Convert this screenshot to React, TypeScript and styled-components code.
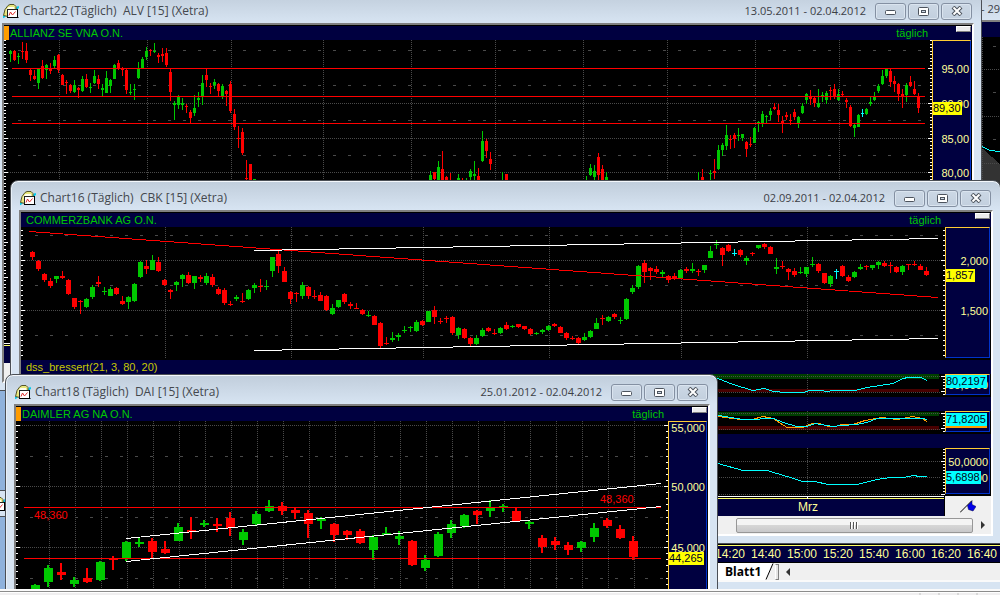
import React from "react";
import styled, { createGlobalStyle } from "styled-components";

/* ---------- theme values ---------- */

const NAVY = "#000040";
const GRID = "#4a4a4a";
const UP = "#00c800";
const DOWN = "#ff0000";
const CYAN = "#00ffff";
const ORANGE = "#ff9c00";
const TAG_YELLOW = "#ffff00";
const AXIS_TEXT = "#ffff99";
const CHART_FONT = '"Liberation Sans", Arial, sans-serif';
const TITLE_FONT = '"Open Sans", "Noto Sans", sans-serif';

const GlobalStyle = createGlobalStyle`
  * { box-sizing: border-box; }
  body { margin: 0; background: #f0f0f0; font-family: ${TITLE_FONT}; }
  button { font: inherit; padding: 0; }
`;

/* ---------- layout ---------- */

const Page = styled.div`
  display: flex;
  flex-direction: column;
  height: 100vh;
  overflow: hidden;
`;

const Desktop = styled.main`
  position: relative;
  flex: 1;
  overflow: hidden;
  background: #8fb2dc;
`;

const StatusBar = styled.footer`
  display: flex;
  justify-content: flex-end;
  gap: 17px;
  height: 6px;
  padding-right: 22px;
  border-top: 2px solid #fafafa;
  background: linear-gradient(#8c8c8c 1px, #ffffff 1px, #ffffff 2px, #f0eff0 2px);
`;

const StatusMark = styled.span`
  width: 2px;
  margin-top: 2px;
  background: #d8d8d8;
`;

const WindowFrame = styled.section<{ $top: number; $left: number; $right: number }>`
  position: absolute;
  top: ${(p) => p.$top}px;
  left: ${(p) => p.$left}px;
  right: ${(p) => p.$right}px;
  display: flex;
  flex-direction: column;
  padding: 0 7px 7px 8px;
  border: 1px solid #4b4f55;
  border-radius: 8px 8px 0 0;
  background: linear-gradient(#c0cddb, #d7e4f2 29px, #d7e4f2);
  box-shadow: inset 0 1px 0 #f4f8fc, inset 1px 0 0 #e8f0f8;
`;

const TitleBar = styled.header`
  display: flex;
  align-items: center;
  height: 29px;
  padding: 5px 2px 0 1px;
`;

const TitleText = styled.h2`
  flex: 1;
  margin: 0 0 0 4px;
  font: 400 12px/16px ${TITLE_FONT};
  color: #44484e;
  white-space: pre;
`;

const DateRange = styled.span`
  margin-right: 9px;
  font: 400 11px/16px ${TITLE_FONT};
  color: #3c4046;
  white-space: nowrap;
`;

const Controls = styled.div`
  display: flex;
  gap: 2px;
`;

const ControlButton = styled.button`
  display: flex;
  align-items: center;
  justify-content: center;
  width: 31px;
  height: 17px;
  border: 1px solid #8490a2;
  border-radius: 3px;
  background: linear-gradient(#ccd8e5, #c2cfde);
  box-shadow: inset 0 0 0 1px #dae4ef;
`;

const WindowBody = styled.div`
  display: flex;
  flex-direction: column;
  padding-top: 1px;
  border: 2px solid;
  border-color: #808080 #ffffff #ffffff #808080;
  background: #000000;
`;

const InfoBar = styled.div`
  display: flex;
  height: 14px;
  background: ${NAVY};
  font: 400 11px/14px ${CHART_FONT};
  color: ${UP};
`;

const Marker = styled.span`
  width: 5px;
  background: ${ORANGE};
`;

const InfoName = styled.span<{ $inset: number; $color?: string }>`
  flex: 1;
  padding-left: ${(p) => p.$inset}px;
  color: ${(p) => p.$color ?? UP};
  white-space: nowrap;
`;

const Period = styled.span`
  padding-right: 4px;
`;

const NubCell = styled.span<{ $width: number }>`
  display: flex;
  justify-content: flex-end;
  width: ${(p) => p.$width}px;
  padding-right: 1px;
`;

const Nub = styled.button`
  width: 15px;
  height: 6px;
  border: 1px solid;
  border-color: #ffffff #808080 #808080 #ffffff;
  background: #ececec;
`;

const PlotRow = styled.div<{ $height: number }>`
  display: flex;
  height: ${(p) => p.$height}px;
  background: #000000;
`;

const Plot = styled.svg`
  flex: 1;
  min-width: 0;
  height: 100%;
  overflow: hidden;
`;

const RulerSvg = styled.svg`
  width: 4px;
  height: 100%;
`;

const AxisPanel = styled.div<{ $width: number; $gap: number }>`
  width: ${(p) => p.$width - 1}px;
  margin: 0 1px ${(p) => p.$gap}px 0;
  border: 1px solid;
  border-color: #ffcc33 #0033cc #0033cc #ffcc33;
  background: ${NAVY};
`;

const AxisSvg = styled.svg`
  display: block;
  width: 100%;
  height: 100%;
  overflow: visible;
  font: 400 11px ${CHART_FONT};
`;

const TimeRow = styled.div`
  display: flex;
  height: 20px;
  background: #f0f0f0;
`;

const TimeAxis = styled.div`
  flex: 1;
  min-width: 0;
  border-right: 1px solid #000000;
  background: linear-gradient(#ffffff 1px, #000000 1px, #000000 2px, #ffff66 2px, #ffff66 3px, ${NAVY} 3px);
`;

const TimeSvg = styled.svg`
  display: block;
  width: 100%;
  height: 20px;
  font: 400 12px ${CHART_FONT};
`;

const PenCell = styled.div<{ $width: number }>`
  display: flex;
  align-items: center;
  justify-content: center;
  width: ${(p) => p.$width}px;
`;

const ScrollBar = styled.div`
  display: flex;
  align-items: center;
  height: 18px;
  background: #f0f0f0;
`;

const ScrollArrow = styled.button`
  display: flex;
  align-items: center;
  justify-content: center;
  width: 18px;
  height: 18px;
  border: 0;
  background: transparent;
`;

const ScrollThumb = styled.button`
  display: flex;
  align-items: center;
  justify-content: center;
  width: 237px;
  height: 15px;
  margin-left: auto;
  border: 1px solid #979797;
  border-radius: 2px;
  background: linear-gradient(#f4f4f4 45%, #d6d6d6 50%, #c8c8ca);
`;

/* ---------- intraday window behind the others ---------- */

const BackWindow = styled.section`
  position: absolute;
  inset: 0 0 0 710px;
  display: flex;
  flex-direction: column;
  padding-bottom: 7px;
  background: #d7e4f2;
`;

const BackTitle = styled.header`
  height: 22px;
  border-bottom: 2px solid #808080;
  background: linear-gradient(#c9d5e2, #d7e4f2);
  font: 400 11px/18px ${TITLE_FONT};
  color: #3c4046;
  text-align: right;
`;

const BackInfo = styled.div`
  height: 15px;
  background: ${NAVY};
`;

const BackPlot = styled.div`
  flex: 1;
  min-height: 0;
  display: flex;
  background: #000000;
`;

const Times = styled.ol`
  display: flex;
  justify-content: flex-end;
  height: 19px;
  margin: 0;
  padding: 0;
  list-style: none;
  border-bottom: 1px solid #000000;
  background: linear-gradient(#000000 1px, #ffff66 1px, #ffff66 2px, ${NAVY} 2px);
  font: 400 12px/20px ${CHART_FONT};
  color: ${AXIS_TEXT};
`;

const TimeCell = styled.li`
  flex: 0 0 36px;
  text-align: center;
`;

const SheetTabs = styled.nav`
  display: flex;
  align-items: center;
  height: 19px;
  padding-left: 7px;
  background: #f0f0f0;
  border-bottom: 2px solid #fafafa;
`;

const SheetTab = styled.button`
  width: 46px;
  height: 17px;
  padding-left: 8px;
  border: 0;
  background: #ffffff;
  font: 700 12px/16px ${TITLE_FONT};
  color: #000000;
  text-align: left;
`;

const Splitter = styled.span`
  width: 4px;
  height: 16px;
  border: 1px solid #808080;
  border-left-color: #ffffff;
  background: #e4e4e4;
`;

const MiniWindow = styled.section`
  position: absolute;
  top: 490px;
  left: -140px;
  width: 160px;
  height: 27px;
  padding: 4px 0 0 129px;
  border: 1px solid #4b4f55;
  background: #d7e4f2;
`;

/* ---------- chart data ---------- */

type Run = [start: number, candles: string];
type Pt = [x: number, y: number];

const ALV: Run[] = [
  [0, "g50 51 54 62,r50 51 60 61,g53 56 57 64,r42 51 52 59,r43 51 60 63,r69 70 75 81,r70 76 79 80,g68 69 83 89,r60 66 78 79,g64 65 70 79,r63 69 71 74,g56 60 66 68,r54 55 70 73,r74 75 85 85,r80 82 83 94,r84 85 91 93,g80 85 92 93,r87 88 90 98,g76 79 91 92,r74 79 87 88,g83 87 88 93,g70 76 83 84,r75 79 84 89,g84 88 90 96,g71 78 93 93,g79 80 86 93,g64 65 79 79,r60 63 68 70,r67 68 70 76,r69 70 90 94,g84 92 93 95,g84 89 90 100,g62 69 78 79,g57 59 69 69,g47 51 57 60,r49 50 51 56,g43 51 52 53,r53 55 57 63,r48 54 56 62,r48 53 65 67,r69 72 92 101,g101 103 105 120,g95 97 105 109,g98 103 105 110,r104 106 107 113,r110 112 118 123,g95 108 113 116,g92 98 100 107,g75 83 96 105,r69 75 80 87,r83 86 87 94,g79 82 85 89,r83 84 91 97,g84 86 96 99,r90 91 94 106,r81 84 111 113,r109 114 127 130,r126 138 139 148,r128 132 153 155,r160 178 179 190,r164 164 200 200,g179 179 200 200"],
  [105, "g171 175 200 200,r172 172 179 190,g161 167 200 200,r151 169 200 200,r176 177 200 200,r173 198 199 200"],
  [112, "g174 178 200 200,r178 198 199 200,g178 198 199 200,g169 171 177 190,g161 174 176 190,r168 176 200 200,g131 141 161 162,r139 141 151 158,r152 159 164 170"],
  [123, "g172 198 199 200,r174 174 200 200"],
  [144, "g176 198 199 200,g164 168 175 176,g165 171 177 190,r153 157 175 190,r165 169 200 200,g172 177 200 200"],
  [172, "g172 198 199 200,r169 177 200 200"],
  [175, "g170 173 174 190,r159 171 173 179,g145 150 169 170,g143 145 150 156,g125 135 146 150,r135 139 140 149,r133 135 139 148,g128 135 136 141,g134 134 138 141,r141 142 149 157,r137 144 145 147,g127 128 143 143,g121 122 123 132,g111 114 123 127,g115 116 117 123,g108 111 115 120,r103 107 109 110,r104 110 115 122,r116 121 123 133,r112 115 117 120,r114 120 121 125,r109 112 117 120,g116 117 123 128,g103 106 113 114,g93 94 100 104,r90 97 99 105,r96 98 103 107,g89 103 107 108,g92 95 97 102,g91 93 100 104,r87 90 91 100,r84 89 97 99,g89 94 100 101,r91 94 95 97,r98 100 102 108,r105 107 126 127,g124 125 128 137,g114 115 127 127,c109 113 114 117,g108 109 114 115,g97 102 104 106,g92 96 100 101,g84 86 91 93,g70 76 84 85,g69 69 76 78,r69 71 82 87,r76 81 84 92,r83 84 94 101,r89 94 97 108,g83 85 95 102,r76 82 86 87,r81 89 94 95,r93 96 108 113"],
];

const CBK: Run[] = [
  [0, "r251 252 257 260,r260 261 269 271,r273 274 280 282,r278 281 286 288,g276 276 279 283,r271 276 278 279,r279 280 294 295,r298 298 307 309,r300 301 302 314,g298 299 307 308,g285 287 297 299,r276 282 284 287,g287 291 292 295,g287 289 296 296,r287 288 294 295,r296 301 304 305,g296 297 302 309,g283 284 301 302,g261 262 277 278,r260 266 269 274,g255 260 270 270,r257 262 271 272,r279 280 285 286,r289 290 292 299,g281 282 285 291,g274 275 279 287,r272 275 283 284,g276 276 283 289,r275 277 279 282,g273 276 283 285,r274 277 285 287,r287 289 294 295,r288 290 303 305,r301 304 305 306,g295 297 299 301,r293 301 302 303,g289 290 299 300,g283 285 288 293,r279 286 287 292,g280 286 287 290,g257 257 271 277,r251 254 266 273,r267 271 282 282,r291 292 299 304,r292 293 294 302,g282 285 296 299,r286 287 296 299,r290 296 297 299,r292 295 301 301,r295 296 310 311,g304 308 314 315,g300 300 307 308,r293 294 302 304,r302 304 306 309,r303 308 309 309,r309 310 314 315,g311 315 316 317,r315 316 325 325,r322 323 346 348,r337 343 344 345,g332 338 340 342,g333 335 337 341,g326 330 331 333,g326 327 328 332,g320 322 331 332,r320 321 325 326,g311 311 322 322,r306 310 317 324,r318 321 322 324,r316 318 319 323,r316 317 333 335,g327 328 335 339,r328 329 338 339,r337 338 344 346,g335 338 344 345,g328 330 336 337,r327 328 331 332,r329 333 334 335,g327 328 333 334,r322 325 329 330,g325 326 327 328,r324 324 327 328,r326 326 329 330,r328 329 334 335,g332 333 334 335,g329 330 332 334,g325 326 330 331,r323 324 326 327,r326 327 333 333,r332 333 338 340,r336 338 339 340,r337 338 343 344,g333 337 340 341,g330 331 337 338,g318 323 329 329,r315 318 319 325,g316 317 321 322,r313 314 317 319,g317 320 321 324,g298 299 319 320,g285 288 292 294,g265 266 287 289,r260 263 272 283,r267 268 271 280,r266 269 272 274,g270 272 274 277,r275 276 280 283,r273 276 279 280,g269 270 278 279,r267 269 271 273,g263 269 271 273,r269 271 272 276,g265 265 270 273,g246 251 258 258,g240 244 245 249,r247 248 255 266,r244 245 251 252,c249 253 254 256,r249 250 255 257,g256 258 261 265,r252 253 254 256,g245 245 248 249,r243 244 247 249,r246 247 254 254,g258 267 269 274,r261 266 267 269,r268 269 272 280,r268 271 275 277,g267 272 273 274,g267 267 274 277,g257 264 265 267,r263 264 271 273,r273 273 283 284,g275 276 284 287,c269 271 272 279,r265 266 276 277,r275 277 281 282,g271 272 277 278,g264 267 269 270,r265 266 267 270,g265 265 268 270,g261 262 265 269,r261 263 266 267,r262 265 266 273,r266 267 272 273,g265 266 272 275,r264 264 265 270,r261 264 265 266,r264 266 270 270,r267 271 275 276"],
];

const DAI: Run[] = [
  [0, "g584 585 590 590,g565 568 582 587,r563 572 575 580,g577 580 584 587,r568 578 582 583,g561 562 580 581,r556 559 560 570,g541 542 558 561,g538 542 544 547,r538 541 552 558,r541 549 553 554,g523 527 541 541,r517 530 532 539,g520 523 525 527,r518 524 526 532,r512 518 528 536,g529 532 540 545,g511 514 524 525,g500 506 511 512,r502 506 511 515,r507 510 513 519,r510 513 524 538,g517 519 521 529,r523 524 535 542,r530 531 535 540,r529 531 543 544,g535 537 550 560,g527 533 535 535,g531 536 539 545,r540 541 565 566,g555 560 568 571,g532 534 556 557,g520 524 533 538,g514 515 526 528,r510 511 515 524,g500 508 511 517,g504 506 508 512,r507 511 521 521,g520 522 524 529,r535 538 547 553,r537 541 545 550,r542 545 550 555,g541 542 548 552,g523 528 537 542,r518 520 526 528,r525 529 538 539,r536 541 557 560"],
];

const STOCH: Pt[] = [[700, 374], [718, 378], [733, 384], [753, 390], [764, 388], [774, 391], [786, 392], [803, 392], [810, 390], [820, 390], [827, 391], [834, 390], [855, 390], [867, 387], [880, 385], [893, 383], [903, 378], [908, 377], [921, 377], [927, 380]];
const FAST: Pt[] = [[700, 414], [718, 415], [725, 416], [743, 419], [753, 419], [768, 418], [774, 418], [783, 422], [797, 426], [807, 426], [815, 423], [833, 426], [842, 425], [857, 424], [867, 422], [877, 418], [923, 418], [927, 419]];
const SLOW: Pt[] = [[700, 414], [718, 416], [732, 418], [742, 419], [752, 419], [763, 416], [773, 418], [787, 427], [803, 427], [812, 423], [820, 423], [828, 426], [835, 426], [842, 424], [853, 424], [865, 420], [882, 417], [897, 419], [913, 416], [922, 418], [927, 421]];
const MOMENTUM: Pt[] = [[700, 458], [718, 463], [743, 470], [767, 470], [787, 476], [803, 481], [815, 481], [828, 484], [857, 484], [877, 479], [890, 477], [904, 477], [913, 475], [920, 476], [927, 476]];

/* ---------- chart parts ---------- */

const COLORS: Record<string, string> = { g: UP, r: DOWN, c: CYAN };

interface CandlesProps {
  runs: Run[];
  first: number;
  step: number;
  body: number;
  wick?: number;
}

function Candles({ runs, first, step, body, wick = 1 }: CandlesProps) {
  return (
    <>
      {runs.flatMap(([start, text]) =>
        text.split(",").map((item, i) => {
          const [hi, top, bottom, lo] = item.slice(1).split(" ").map(Number);
          const x = first + (start + i) * step;
          return (
            <g key={x} fill={COLORS[item[0]]}>
              <rect x={x - (wick - 1)} y={hi} width={wick} height={Math.max(lo - hi, 1)} />
              <rect x={x - (body - 1) / 2} y={top} width={body} height={Math.max(bottom - top, 1)} />
            </g>
          );
        }),
      )}
    </>
  );
}

interface GridProps {
  x0: number;
  x1: number;
  y0: number;
  y1: number;
  rows?: number[];
  halfRows?: number[];
  cols?: number[];
  phase?: number;
}

function Grid({ x0, x1, y0, y1, rows = [], halfRows = [], cols = [], phase = 0 }: GridProps) {
  const dotted = [
    ...rows.map((y) => `M${x0} ${y + 0.5}H${x1}`),
    ...cols.map((x) => `M${x + 0.5} ${y0}V${y1}`),
  ].join("");
  const dashed = halfRows.map((y) => `M${phase} ${y + 0.5}H${x1}`).join("");
  return (
    <g stroke={GRID} fill="none">
      <path d={dotted} strokeDasharray="1 1" />
      <path d={dashed} strokeDasharray="3 12" />
    </g>
  );
}

function HLine({ y, x0, x1 }: { y: number; x0: number; x1: number }) {
  return <rect x={x0} y={y} width={x1 - x0} height={1} fill={DOWN} />;
}

function Curve({ points, color }: { points: Pt[]; color: string }) {
  return (
    <polyline
      points={points.map(([x, y]) => `${x},${y + 0.5}`).join(" ")}
      fill="none"
      stroke={color}
    />
  );
}

interface Scale {
  y0: number;
  y1: number;
  major: number;
  step: number;
  every: number;
}

function Ruler({ scale, side }: { scale: Scale; side: "left" | "right" }) {
  const ticks: React.ReactElement[] = [];
  const from = Math.ceil((scale.y0 - scale.major) / scale.step);
  const to = Math.floor((scale.y1 - scale.major) / scale.step);
  for (let k = from; k <= to; k++) {
    const len = k % scale.every === 0 ? 4 : 2;
    const y = Math.round(scale.major + k * scale.step) - scale.y0;
    ticks.push(<rect key={k} x={side === "left" ? 0 : 4 - len} y={y} width={len} height={1} fill="#fff" />);
  }
  return <RulerSvg aria-hidden="true" shapeRendering="crispEdges">{ticks}</RulerSvg>;
}

interface AxisLabel {
  y: number;
  text: string;
}

interface AxisTag extends AxisLabel {
  color: string;
  width: number;
  underline?: string;
}

interface PanelProps {
  height: number;
  axisWidth: number;
  axisGap?: number;
  origin: Pt;
  scale: Scale;
  labels: AxisLabel[];
  tag: AxisTag;
  children: React.ReactNode;
}

function Panel({ height, axisWidth, axisGap = 2, origin, scale, labels, tag, children }: PanelProps) {
  const tagY = tag.y - origin[1] - 7;
  return (
    <PlotRow $height={height}>
      <Ruler scale={scale} side="left" />
      <Plot shapeRendering="crispEdges" fontFamily={CHART_FONT} fontSize={11}>
        <g transform={`translate(${-origin[0] - 4} ${-origin[1]})`}>{children}</g>
      </Plot>
      <Ruler scale={scale} side="right" />
      <AxisPanel $width={axisWidth} $gap={axisGap}>
        <AxisSvg>
          {labels.map((l) => (
            <text key={l.text} x={axisWidth - 4} y={l.y - origin[1] + 4} textAnchor="end" fill={AXIS_TEXT}>
              {l.text}
            </text>
          ))}
          <rect x={0} y={tagY} width={tag.width} height={13} fill={tag.color} />
          {tag.underline && <rect x={0} y={tagY + 13} width={tag.width} height={2} fill={tag.underline} />}
          <text x={0} y={tagY + 10} fill="#000020">
            {tag.text}
          </text>
        </AxisSvg>
      </AxisPanel>
    </PlotRow>
  );
}

/* ---------- window chrome ---------- */

function ChartIcon() {
  return (
    <svg width="16" height="15" viewBox="0 0 16 15" aria-hidden="true">
      <path d="M0 13.5 5 8.500M11 7.500 15.800 2.500" stroke="#00c8e8" strokeWidth="2" />
      <path d="M.5 11.500 2 5.500 5 1.500 7 .5H11L13 2.500V6L5 12.500Z" fill="#e9e77c" stroke="#55552a" />
      <path d="M3.500 5.500 5.500 3H11L11.500 5.500H4.500L3.500 8Z" fill="#fffff0" />
      <rect x="4.500" y="5.500" width="10" height="8" fill="#fff" stroke="#222" />
      <path d="M4 13.500H15.500M14.500 5V14" stroke="#000" />
      <path d="M6 11.500 7.500 8 9.500 11 12.500 7.500" fill="none" stroke="#e03030" />
    </svg>
  );
}

function MinimizeGlyph() {
  return (
    <svg width="12" height="9" aria-hidden="true">
      <rect x=".5" y="3.500" width="10" height="4" rx="1" fill="#fff" stroke="#4c535d" />
    </svg>
  );
}

function RestoreGlyph() {
  return (
    <svg width="11" height="9" aria-hidden="true">
      <rect x=".5" y=".5" width="10" height="8" rx="1" fill="#fff" stroke="#4c535d" />
      <rect x="3.500" y="3.500" width="4" height="2" fill="#d0dae6" stroke="#4c535d" />
    </svg>
  );
}

function CloseGlyph() {
  return (
    <svg width="12" height="10" aria-hidden="true">
      <path d="M2 1 10 9M10 1 2 9" stroke="#4c535d" strokeWidth="4" />
      <path d="M2.500 1.500 9.500 8.500M9.500 1.500 2.500 8.500" stroke="#fff" strokeWidth="2" />
    </svg>
  );
}

function PenIcon() {
  return (
    <svg width="16" height="13" viewBox="0 0 16 13" aria-hidden="true">
      <path d="M0 12.500 12 .5" stroke="#000" />
      <path d="M7.500 5.500 12 1V4.500L16 6.500 13 11 8.500 9.500Z" fill="#0000e8" stroke="#000040" strokeWidth=".5" />
    </svg>
  );
}

function Arrow({ flip }: { flip?: boolean }) {
  return (
    <svg width="5" height="8" aria-hidden="true">
      <path d={flip ? "M4 0V8L0 4Z" : "M1 0V8L5 4Z"} fill="#333" />
    </svg>
  );
}

interface ChartWindowProps {
  top: number;
  left: number;
  right: number;
  title: string;
  range: string;
  name: string;
  marker?: boolean;
  axisWidth: number;
  timeLabel?: string;
  children: React.ReactNode;
}

function ChartWindow(p: ChartWindowProps) {
  return (
    <WindowFrame $top={p.top} $left={p.left} $right={p.right} aria-label={p.title}>
      <TitleBar>
        <ChartIcon />
        <TitleText>{p.title}</TitleText>
        <DateRange>{p.range}</DateRange>
        <Controls>
          <ControlButton aria-label="Minimieren"><MinimizeGlyph /></ControlButton>
          <ControlButton aria-label="Wiederherstellen"><RestoreGlyph /></ControlButton>
          <ControlButton aria-label="Schließen"><CloseGlyph /></ControlButton>
        </Controls>
      </TitleBar>
      <WindowBody>
        <InfoBar>
          {p.marker && <Marker />}
          <InfoName $inset={p.marker ? 1 : 5}>{p.name}</InfoName>
          <Period>täglich</Period>
          <NubCell $width={p.axisWidth}>
            <Nub aria-label="Skala" />
          </NubCell>
        </InfoBar>
        {p.children}
        <TimeRow>
          <TimeAxis>
            <TimeSvg>
              {p.timeLabel && (
                <>
                  <rect x={786} y={0} width={1} height={3} fill="#fff" />
                  <text x={787} y={15} textAnchor="middle" fill={AXIS_TEXT}>{p.timeLabel}</text>
                </>
              )}
            </TimeSvg>
          </TimeAxis>
          <PenCell $width={p.axisWidth}><PenIcon /></PenCell>
        </TimeRow>
        <ScrollBar>
          <ScrollArrow aria-label="Nach links"><Arrow flip /></ScrollArrow>
          <ScrollThumb aria-label="Bildlauf">
            <svg width="9" height="7" shapeRendering="crispEdges" aria-hidden="true">
              <path d="M.5 0V7M3.500 0V7M6.500 0V7" stroke="#555" />
              <path d="M1.500 0V7M4.500 0V7M7.500 0V7" stroke="#fff" />
            </svg>
          </ScrollThumb>
          <ScrollArrow aria-label="Nach rechts"><Arrow /></ScrollArrow>
        </ScrollBar>
      </WindowBody>
    </WindowFrame>
  );
}

/* ---------- page ---------- */

const ALV_SCALE: Scale = { y0: 40, y1: 340, major: 68, step: 3.48, every: 10 };
const CBK_SCALE: Scale = { y0: 227, y1: 356, major: 260, step: 5, every: 10 };
const DAI_SCALE: Scale = { y0: 421, y1: 600, major: 425, step: 6.1, every: 10 };
const TIMES = ["14:20", "14:40", "15:00", "15:20", "15:40", "16:00", "16:20", "16:40"];

export default function App() {
  return (
    <Page>
      <GlobalStyle />
      <Desktop>
        <MiniWindow><ChartIcon /></MiniWindow>

        <BackWindow>
          <BackTitle>- 29</BackTitle>
          <BackInfo />
          <BackPlot>
            <Plot shapeRendering="crispEdges">
              <g transform="translate(-710 -37)">
                <path d="M975 142 1000 164V600H975Z" fill="#333333" />
                <Grid x0={982} x1={1000} y0={37} y1={600} rows={[69, 116, 163]} halfRows={[46, 92, 139]} cols={[982]} phase={993} />
                <Curve points={[[975, 144], [982, 146], [990, 150], [1000, 151]]} color={CYAN} />
              </g>
            </Plot>
          </BackPlot>
          <Times>
            {TIMES.map((t) => <TimeCell key={t}>{t}</TimeCell>)}
          </Times>
          <SheetTabs>
            <SheetTab>Blatt1</SheetTab>
            <svg width="12" height="17" aria-hidden="true">
              <path d="M0 0H9L3 17H0Z" fill="#fff" />
              <path d="M3 16.500 10 .5" stroke="#000" />
            </svg>
            <Splitter />
            <ScrollArrow aria-label="Blätter nach links"><Arrow flip /></ScrollArrow>
          </SheetTabs>
        </BackWindow>

        <ChartWindow top={-7} left={-7} right={18} title="Chart22 (Täglich)  ALV [15] (Xetra)" range="13.05.2011 - 02.04.2012" name="ALLIANZ SE VNA O.N." marker axisWidth={40}>
          <Panel
            height={303}
            axisWidth={40}
            origin={[4, 40]}
            scale={ALV_SCALE}
            labels={[{ y: 68, text: "95,00" }, { y: 103, text: "90,00" }, { y: 138, text: "85,00" }, { y: 172, text: "80,00" }]}
            tag={{ y: 108, text: "89,30", color: TAG_YELLOW, width: 29 }}
          >
            <Grid x0={8} x1={928} y0={40} y1={343} rows={[103, 138, 172]} halfRows={[50, 85, 120, 155]} cols={[59, 147, 231, 323, 411, 495, 583, 667, 755, 839]} phase={18} />
            <Candles runs={ALV} first={10} step={4} body={3} />
            <HLine y={68} x0={12} x1={925} />
            <HLine y={96} x0={12} x1={925} />
            <HLine y={123} x0={12} x1={925} />
          </Panel>
        </ChartWindow>

        <ChartWindow top={180} left={10} right={-1} title="Chart16 (Täglich)  CBK [15] (Xetra)" range="02.09.2011 - 02.04.2012" name="COMMERZBANK AG O.N." axisWidth={46} timeLabel="Mrz">
          <Panel
            height={133}
            axisWidth={46}
            origin={[21, 227]}
            scale={CBK_SCALE}
            labels={[{ y: 260, text: "2,000" }, { y: 310, text: "1,500" }]}
            tag={{ y: 275, text: "1,857", color: TAG_YELLOW, width: 29 }}
          >
            <Grid x0={25} x1={941} y0={227} y1={358} rows={[260, 310]} halfRows={[235, 285, 335]} cols={[165, 291, 423, 549, 681, 807]} phase={35} />
            <Candles runs={CBK} first={32} step={6} body={5} />
            <Curve points={[[29, 231], [938, 297]]} color={DOWN} />
            <Curve points={[[254, 250], [938, 238]]} color="#ffffff" />
            <Curve points={[[254, 350], [938, 338]]} color="#ffffff" />
          </Panel>
          <InfoBar><InfoName $inset={5} $color="#c8c800">dss_bressert(21, 3, 80, 20)</InfoName></InfoBar>
          <Panel
            height={23}
            axisWidth={46}
            origin={[21, 374]}
            scale={{ y0: 374, y1: 394, major: 376, step: 3, every: 5 }}
            labels={[{ y: 384, text: "50,0000" }]}
            tag={{ y: 381, text: "80,2197", color: CYAN, width: 41 }}
          >
            <rect x={21} y={374} width={918} height={5} fill="#004000" />
            <rect x={21} y={389} width={918} height={3} fill="#480000" />
            <Grid x0={25} x1={941} y0={374} y1={395} rows={[376, 392]} cols={[807]} />
            <Curve points={STOCH} color={CYAN} />
          </Panel>
          <InfoBar />
          <Panel
            height={23}
            axisWidth={46}
            origin={[21, 411]}
            scale={{ y0: 411, y1: 431, major: 413, step: 3, every: 5 }}
            labels={[]}
            tag={{ y: 419, text: "71,8205", color: CYAN, width: 41, underline: ORANGE }}
          >
            <rect x={21} y={412} width={918} height={4} fill="#004000" />
            <rect x={21} y={426} width={918} height={4} fill="#480000" />
            <Grid x0={25} x1={941} y0={411} y1={432} rows={[413, 429]} cols={[807]} />
            <Curve points={SLOW} color={ORANGE} />
            <Curve points={FAST} color={CYAN} />
          </Panel>
          <InfoBar />
          <Panel
            height={48}
            axisWidth={46}
            origin={[21, 448]}
            scale={{ y0: 448, y1: 495, major: 461, step: 3, every: 11 }}
            labels={[{ y: 461, text: "50,0000" }, { y: 477, text: "0,0000" }]}
            tag={{ y: 477, text: "5,6898", color: CYAN, width: 35 }}
          >
            <Grid x0={25} x1={941} y0={448} y1={495} rows={[461, 477, 494]} cols={[807]} />
            <Curve points={MOMENTUM} color={CYAN} />
          </Panel>
        </ChartWindow>

        <ChartWindow top={374} left={5} right={282} title="Chart18 (Täglich)  DAI [15] (Xetra)" range="25.01.2012 - 02.04.2012" name="DAIMLER AG NA O.N." marker axisWidth={40}>
          <Panel
            height={200}
            axisWidth={40}
            origin={[16, 421]}
            scale={DAI_SCALE}
            labels={[{ y: 427, text: "55,000" }, { y: 486, text: "50,000" }, { y: 547, text: "45,000" }]}
            tag={{ y: 558, text: "44,265", color: TAG_YELLOW, width: 35 }}
          >
            <Grid
              x0={20}
              x1={664}
              y0={421}
              y1={620}
              rows={[425, 486, 547]}
              halfRows={[456, 517, 578]}
              cols={[49, 75, 101, 127, 153, 179, 205, 231, 257, 283, 309, 335, 374, 400, 426, 452, 478, 504, 530, 556, 582, 608, 634]}
              phase={30}
            />
            <Candles runs={DAI} first={35} step={13} body={9} wick={2} />
            <HLine y={507} x0={24} x1={661} />
            <HLine y={558} x0={24} x1={661} />
            <Curve points={[[126, 538], [661, 483]]} color="#ffffff" />
            <Curve points={[[126, 561], [661, 506]]} color="#ffffff" />
            <text x={34} y={519} fill={DOWN}>48,360</text>
            <text x={600} y={503} fill={DOWN}>48,360</text>
          </Panel>
        </ChartWindow>
      </Desktop>
      <StatusBar>
        <StatusMark />
        <StatusMark />
        <StatusMark />
        <StatusMark />
      </StatusBar>
    </Page>
  );
}
